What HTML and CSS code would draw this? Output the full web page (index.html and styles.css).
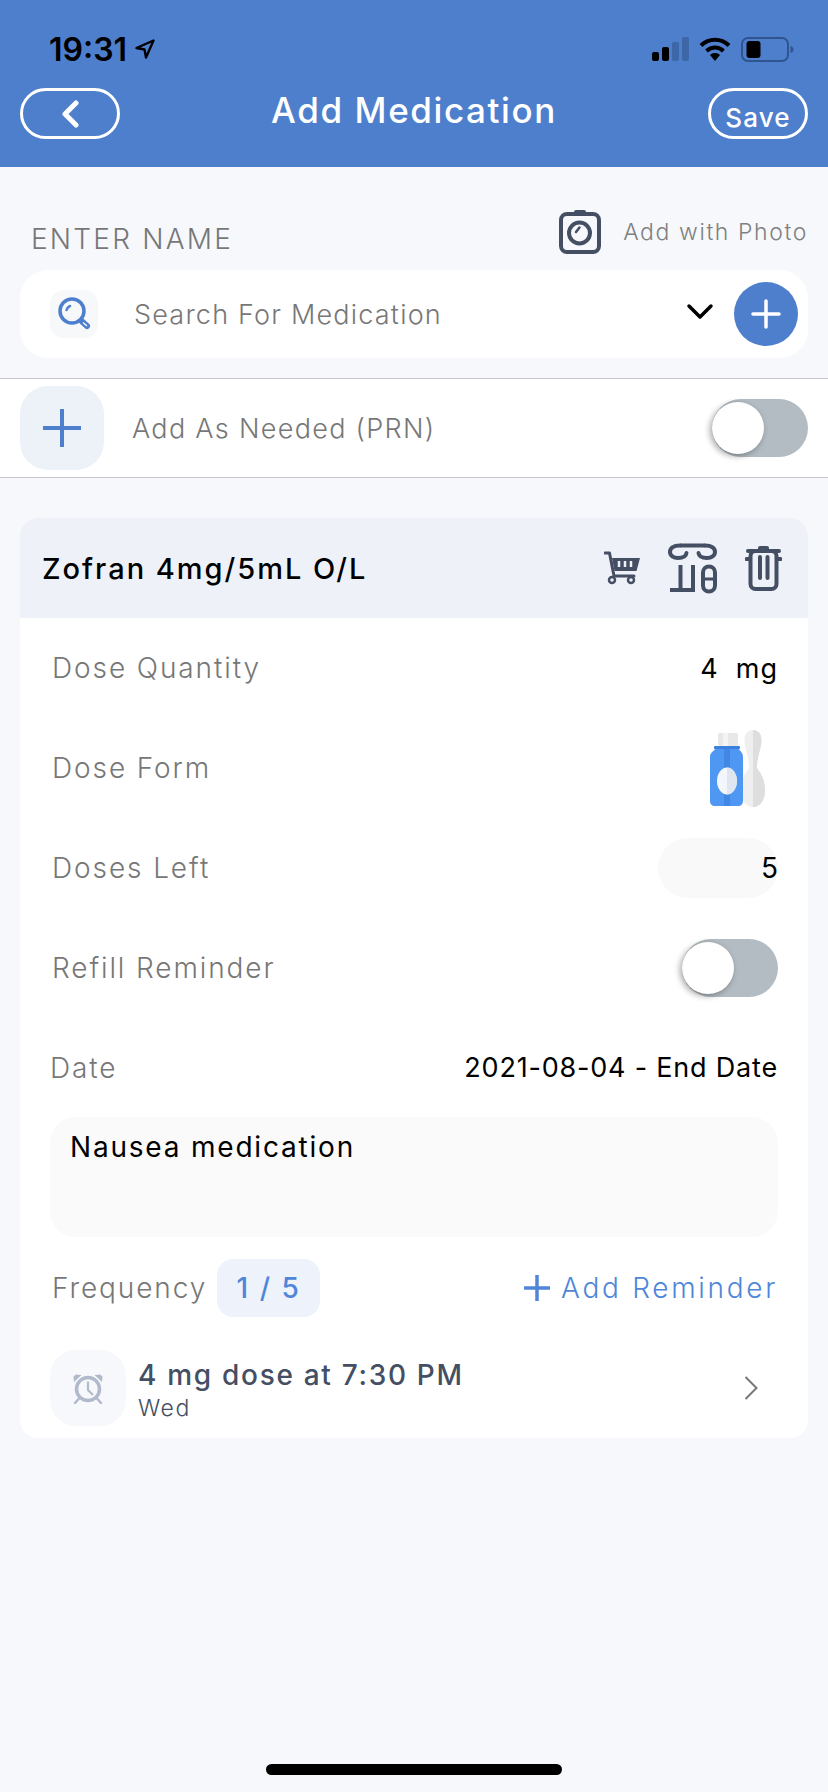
FILE: index.html
```html
<!DOCTYPE html>
<html lang="en">
<head>
    <meta charset="UTF-8">
    <title>Add Medication</title>
    <link rel="stylesheet" href="styles.css">
</head>
<body>
<div class="page">
    <header class="top">
        <div class="status">
            <div class="clock">
                <span>19:31</span>
                <svg width="20" height="20" viewBox="0 0 20 20"><path d="M18.5 1.5 1.5 9l8 1.5 1.5 8z" fill="none" stroke="#000" stroke-width="2.4" stroke-linejoin="round"/></svg>
            </div>
            <div class="status-icons">
                <svg width="37" height="24" viewBox="0 0 37 24">
                    <rect x="0" y="15" width="7" height="9" rx="2" fill="#000"/>
                    <rect x="10" y="10" width="7" height="14" rx="2" fill="#000"/>
                    <rect x="20" y="5" width="7" height="19" rx="2" fill="#3d67a6"/>
                    <rect x="30" y="0" width="7" height="24" rx="2" fill="#3d67a6"/>
                </svg>
                <svg width="32" height="24" viewBox="0 0 32 24">
                    <path d="M2 8.5C10 .8 22 .8 30 8.5" fill="none" stroke="#000" stroke-width="4"/>
                    <path d="M7.5 14c5-4.6 12-4.6 17 0" fill="none" stroke="#000" stroke-width="4"/>
                    <path d="M11 18c3-2.6 7-2.6 10 0l-5 6z" fill="#000"/>
                </svg>
                <svg width="53" height="25" viewBox="0 0 53 25">
                    <rect x="1" y="1" width="46" height="23" rx="6" fill="none" stroke="#2f5591" stroke-width="2"/>
                    <rect x="5.500" y="4" width="14" height="17" rx="3" fill="#000"/>
                    <path d="M49.500 9c2 .5 3 2 3 3.500s-1 3-3 3.500z" fill="#2f5591"/>
                </svg>
            </div>
        </div>
        <nav class="nav">
            <div class="pill-btn">
                <svg width="18" height="28" viewBox="0 0 18 28"><path d="M15 3 4 14l11 11" fill="none" stroke="#fff" stroke-width="5" stroke-linecap="round" stroke-linejoin="round"/></svg>
            </div>
            <h1 class="title">Add Medication</h1>
            <div class="pill-btn save">Save</div>
        </nav>
    </header>

    <div class="name-row">
        <div class="name-label">ENTER NAME</div>
        <div class="photo">
            <svg width="42" height="44" viewBox="0 0 42 44">
                <rect x="15" y="0" width="12" height="6" rx="2" fill="#454f63"/>
                <rect x="2" y="4" width="38" height="38" rx="6" fill="none" stroke="#454f63" stroke-width="4"/>
                <circle cx="20.500" cy="23" r="10.500" fill="none" stroke="#454f63" stroke-width="4"/>
                <path d="M20.500 17.500 17 22" stroke="#454f63" stroke-width="2.500" stroke-linecap="round"/>
            </svg>
            <span>Add with Photo</span>
        </div>
    </div>

    <div class="search">
        <div class="search-icon">
            <svg width="34" height="34" viewBox="0 0 34 34">
                <circle cx="15" cy="14" r="12" fill="none" stroke="#4e7fcd" stroke-width="3.500"/>
                <path d="M9.500 13c.5-2 1.500-3.200 3.500-4" fill="none" stroke="#4e7fcd" stroke-width="2.500" stroke-linecap="round"/>
                <path d="M25 24.500 30 29" stroke="#4e7fcd" stroke-width="6" stroke-linecap="round"/>
                <path d="M26.500 26 29.500 28.500" stroke="#f7f8fb" stroke-width="1.500" stroke-linecap="round"/>
            </svg>
        </div>
        <div class="search-text">Search For Medication</div>
        <svg class="chevron" width="28" height="17" viewBox="0 0 28 17"><path d="M3 3 14 14 25 3" fill="none" stroke="#000" stroke-width="3.500" stroke-linecap="round" stroke-linejoin="round"/></svg>
        <div class="round-add">
            <svg width="30" height="30" viewBox="0 0 30 30"><path d="M15 2v26M2 15h26" stroke="#fff" stroke-width="3.500" stroke-linecap="round"/></svg>
        </div>
    </div>

    <div class="prn">
        <div class="prn-add">
            <svg width="38" height="38" viewBox="0 0 38 38"><path d="M19 0v38M0 19h38" stroke="#4e7fcd" stroke-width="4"/></svg>
        </div>
        <div class="prn-text">Add As Needed (PRN)</div>
        <div class="toggle"><div class="knob"></div></div>
    </div>

    <section class="card">
        <div class="card-head">
            <div class="drug">Zofran 4mg/5mL O/L</div>
            <div class="drug-tools">
                <svg width="36" height="34" viewBox="0 0 36 34">
                    <path d="M1 2h4.500L10 25h20" fill="none" stroke="#454f63" stroke-width="3" stroke-linecap="round" stroke-linejoin="round"/>
                    <path d="M8 7h28l-3.500 13H10.500z" fill="#454f63"/>
                    <path d="M15 10v6M21 10v6M27 10v6" stroke="#eef1f8" stroke-width="2.500"/>
                    <circle cx="8" cy="29" r="3" fill="none" stroke="#454f63" stroke-width="2.500"/>
                    <circle cx="27" cy="29" r="3" fill="none" stroke="#454f63" stroke-width="2.500"/>
                </svg>
                <svg width="49" height="51" viewBox="0 0 49 51">
                    <g fill="none" stroke="#454f63" stroke-width="4">
                        <path d="M12 2.500h25"/>
                        <path d="M12 2.500C5 2.500 2 5.500 2 9c0 3.500 3.500 6 8 6 4.500 0 8-1.500 8.500-5" stroke-linecap="round"/>
                        <path d="M37 2.500c7 0 10 3 10 6.500 0 3.500-3.500 6-8 6-4.500 0-8-1.500-8.500-5" stroke-linecap="round"/>
                        <path d="M12.500 22v25M25 22v25M2 47h25"/>
                        <rect x="35" y="23.500" width="12" height="25" rx="6"/>
                        <path d="M35 36h12" stroke-width="3"/>
                    </g>
                </svg>
                <svg width="37" height="45" viewBox="0 0 37 45">
                    <g fill="none" stroke="#454f63" stroke-width="4" stroke-linecap="round">
                        <rect x="5.500" y="5" width="26" height="38" rx="5"/>
                        <path d="M3 5h31M15 11v21M22.500 11v21"/>
                        <path d="M1.500 13h3M32.500 13h3"/>
                    </g>
                    <rect x="13" y="0" width="11" height="5" rx="2" fill="#454f63"/>
                </svg>
            </div>
        </div>
        <div class="card-body">
            <div class="row">
                <div class="row-label">Dose Quantity</div>
                <div class="row-value">4&nbsp; mg</div>
            </div>
            <div class="row">
                <div class="row-label">Dose Form</div>
                <svg class="bottle" width="55" height="77" viewBox="0 0 55 77">
                    <path d="M43 0c5 0 8.500 3.500 8.500 10 0 9-4.500 16-4.500 27 0 4 8 7 8 24 0 9-5 16-12 16s-12-7-12-16c0-17 8-20 8-24 0-11-4.500-18-4.500-27C34.500 3.500 38 0 43 0z" fill="#efefef"/>
                    <path d="M43 0c5 0 8.500 3.500 8.500 10 0 9-4.500 16-4.500 27 0 4 8 7 8 24 0 9-5 16-12 16z" fill="#dedede"/>
                    <rect x="8" y="3" width="20" height="13" rx="2" fill="#e8e8e8"/>
                    <rect x="13" y="3" width="5" height="13" fill="#f4f4f4"/>
                    <path d="M5 16h24v3c0 1.500 4 3 4 8v44c0 3-2 5-5 5H5c-3 0-5-2-5-5V27c0-5 5-6.500 5-8z" fill="#4e97f2"/>
                    <path d="M14 16h6v60h-6z" fill="#4287e3"/>
                    <rect x="4" y="16" width="26" height="3" rx="1" fill="#3a80dc"/>
                    <ellipse cx="17" cy="51" rx="10" ry="13.500" fill="#f3f6fb"/>
                    <path d="M17 37.500c5.500 0 10 6 10 13.500s-4.500 13.500-10 13.500z" fill="#dfe6f0"/>
                </svg>
            </div>
            <div class="row">
                <div class="row-label">Doses Left</div>
                <div class="doses-input">5</div>
            </div>
            <div class="row">
                <div class="row-label">Refill Reminder</div>
                <div class="toggle"><div class="knob"></div></div>
            </div>
            <div class="row date-row">
                <div class="row-label">Date</div>
                <div class="date-value">2021-08-04 - End Date</div>
            </div>
            <div class="notes">Nausea medication</div>
            <div class="freq-row">
                <div class="freq-left">
                    <span class="row-label">Frequency</span>
                    <span class="freq-chip">1 / 5</span>
                </div>
                <div class="add-reminder">
                    <svg width="26" height="26" viewBox="0 0 26 26"><path d="M13 0v26M0 13h26" stroke="#4f86d9" stroke-width="3.500"/></svg>
                    <span>Add Reminder</span>
                </div>
            </div>
            <div class="reminder">
                <div class="alarm">
                    <svg width="32" height="32" viewBox="0 0 32 32">
                        <circle cx="16" cy="17" r="11.500" fill="none" stroke="#b0bacb" stroke-width="3.500"/>
                        <path d="M16 9.500V18l5 5" fill="none" stroke="#b0bacb" stroke-width="2.200" stroke-linejoin="round"/>
                        <path d="M2 10 1.500 4.500 4 2.500 9.500 3zM30 10l.5-5.500-2.500-2-5.500.5z" fill="#b0bacb"/>
                        <path d="M7 26.500 3 31M25 26.500l4 4.500" stroke="#b0bacb" stroke-width="2.500" stroke-linecap="round"/>
                    </svg>
                </div>
                <div class="reminder-text">
                    <div class="reminder-title">4 mg dose at 7:30 PM</div>
                    <div class="reminder-day">Wed</div>
                </div>
                <svg width="14" height="24" viewBox="0 0 14 24"><path d="M1.500 1 12.500 12 1.500 23" fill="none" stroke="#777" stroke-width="2"/></svg>
            </div>
        </div>
    </section>

    <div class="home-bar"></div>
</div>
</body>
</html>
```

FILE: styles.css
```css
html, body{
    margin: 0;
    width: 828px;
    height: 1792px;
    overflow: hidden;
    background-color: #F6F8FC;
    font-family: "Inter", "Liberation Sans", sans-serif;
}
.page{
    height: 1792px;
    display: flex;
    flex-direction: column;
}
svg{
    display: block;
    flex: none;
}

/* header */
.top{
    height: 167px;
    box-sizing: border-box;
    padding-top: 34px;
    background-color: #4E7FCD;
}
.status{
    height: 30px;
    display: flex;
    justify-content: space-between;
    align-items: center;
    padding: 0 34px 0 49px;
}
.clock{
    display: flex;
    align-items: center;
    gap: 8px;
    font-size: 32px;
    font-weight: 600;
    color: #000;
}
.status-icons{
    display: flex;
    align-items: center;
    gap: 10px;
}
.nav{
    margin-top: 24px;
    padding: 0 20px;
    display: flex;
    justify-content: space-between;
    align-items: center;
}
.pill-btn{
    width: 100px;
    height: 51px;
    box-sizing: border-box;
    border: 3px solid #fff;
    border-radius: 26px;
    display: flex;
    justify-content: center;
    align-items: center;
    color: #fff;
}
.save{
    font-size: 26px;
    font-weight: 500;
    letter-spacing: 1.2px;
    padding-top: 7px;
}
.title{
    margin: 0;
    padding-bottom: 8px;
    font-size: 35px;
    font-weight: 500;
    letter-spacing: 1.6px;
    color: #fff;
}

/* name + search */
.name-row{
    display: flex;
    justify-content: space-between;
    align-items: flex-end;
    padding: 43px 20px 16px 31px;
}
.name-label{
    font-size: 28px;
    line-height: 30px;
    letter-spacing: 2.2px;
    font-weight: 300;
    color: #777;
}
.photo{
    display: flex;
    align-items: center;
    gap: 22px;
    font-size: 23px;
    font-weight: 300;
    letter-spacing: 1.6px;
    color: #808080;
}
.search{
    height: 88px;
    margin: 0 20px 20px;
    padding: 0 10px 0 30px;
    display: flex;
    align-items: center;
    background-color: #fff;
    border-radius: 28px;
}
.search-icon{
    width: 48px;
    height: 48px;
    display: flex;
    justify-content: center;
    align-items: center;
    background-color: #F7F8FA;
    border-radius: 14px;
}
.search-text{
    flex: 1;
    margin-left: 36px;
    font-size: 27px;
    font-weight: 300;
    letter-spacing: 1.2px;
    color: #777;
}
.chevron{
    margin-right: 20px;
    margin-top: -6px;
}
.round-add{
    width: 64px;
    height: 64px;
    border-radius: 50%;
    background-color: #4E7FCD;
    display: flex;
    justify-content: center;
    align-items: center;
}
.prn{
    height: 100px;
    box-sizing: border-box;
    padding: 0 20px;
    display: flex;
    align-items: center;
    background-color: #fff;
    border-top: 1px solid #c6c6c8;
    border-bottom: 1px solid #c6c6c8;
}
.prn-add{
    width: 84px;
    height: 84px;
    border-radius: 28px;
    background-color: #EDF2F9;
    display: flex;
    justify-content: center;
    align-items: center;
}
.prn-text{
    flex: 1;
    margin-left: 28px;
    font-size: 27px;
    font-weight: 300;
    letter-spacing: 1.3px;
    color: #777;
}

/* toggle */
.toggle{
    width: 96px;
    height: 58px;
    border-radius: 29px;
    background-color: #B3BCC2;
    display: flex;
    align-items: center;
}
.knob{
    width: 52px;
    height: 52px;
    border-radius: 50%;
    background-color: #fff;
    box-shadow: -2px 2px 6px rgba(0, 0, 0, 0.35);
}

/* medication card */
.card{
    margin: 40px 20px 0;
    height: 920px;
    background-color: #fff;
    border-radius: 18px;
    overflow: hidden;
}
.card-head{
    height: 100px;
    padding: 0 26px 0 22px;
    display: flex;
    justify-content: space-between;
    align-items: center;
    background-color: #EEF1F8;
}
.drug{
    font-size: 29px;
    font-weight: 500;
    letter-spacing: 2px;
    color: #000;
}
.drug-tools{
    display: flex;
    align-items: center;
    gap: 28px;
}
.card-body{
    padding: 0 30px;
}
.row{
    height: 100px;
    padding-left: 2px;
    display: flex;
    justify-content: space-between;
    align-items: center;
}
.row-label{
    font-size: 28px;
    font-weight: 300;
    letter-spacing: 1.9px;
    color: #777;
}
.row-value{
    font-size: 27px;
    letter-spacing: 1px;
    font-weight: 400;
    color: #000;
}
.bottle{
    margin-right: 13px;
}
.doses-input{
    width: 120px;
    height: 60px;
    border-radius: 30px;
    background-color: #F9F9F9;
    font-size: 28px;
    line-height: 60px;
    text-align: right;
    color: #000;
}
.date-row{
    height: 99px;
    padding-left: 0;
}
.date-value{
    font-size: 27px;
    font-weight: 400;
    letter-spacing: 0.8px;
    color: #000;
}
.notes{
    height: 120px;
    box-sizing: border-box;
    padding: 11px 20px;
    border-radius: 26px;
    background-color: #FAFAFA;
    font-size: 28px;
    letter-spacing: 1.8px;
    line-height: 38px;
    color: #000;
}
.freq-row{
    margin-top: 22px;
    padding-left: 2px;
    display: flex;
    justify-content: space-between;
    align-items: center;
}
.freq-left{
    display: flex;
    align-items: center;
    gap: 10px;
}
.freq-chip{
    width: 103px;
    height: 58px;
    border-radius: 16px;
    background-color: #EDF2FB;
    font-size: 28px;
    font-weight: 500;
    line-height: 58px;
    text-align: center;
    letter-spacing: 2px;
    color: #4F86D9;
}
.add-reminder{
    display: flex;
    align-items: center;
    gap: 11px;
    font-size: 28px;
    font-weight: 300;
    letter-spacing: 2.7px;
    color: #4F86D9;
}
.reminder{
    margin-top: 33px;
    padding-right: 20px;
    display: flex;
    align-items: center;
}
.alarm{
    width: 76px;
    height: 76px;
    border-radius: 26px;
    background-color: #F6F8FB;
    display: flex;
    justify-content: center;
    align-items: center;
}
.reminder-text{
    flex: 1;
    margin-left: 12px;
}
.reminder-title{
    font-size: 28px;
    line-height: 39px;
    font-weight: 500;
    letter-spacing: 1.7px;
    color: #454F63;
}
.reminder-day{
    font-size: 23px;
    line-height: 26px;
    font-weight: 300;
    letter-spacing: 1.5px;
    color: #454F63;
}

.home-bar{
    width: 296px;
    height: 11px;
    margin: auto auto 17px;
    border-radius: 6px;
    background-color: #000;
}
```
